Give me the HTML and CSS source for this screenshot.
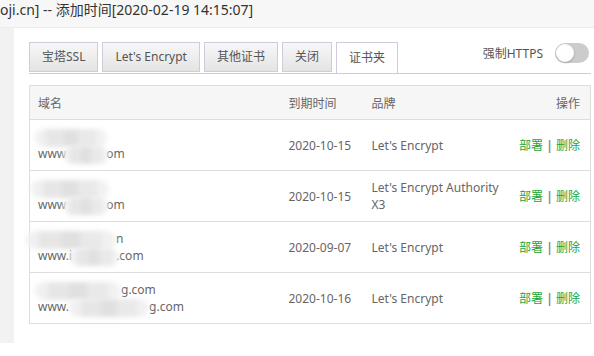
FILE: index.html
```html
<!DOCTYPE html>
<html lang="zh">
<head>
<meta charset="utf-8">
<link rel="stylesheet" href="styles.css">
</head>
<body>
<div class="topbar"><span class="title">oji.cn] -- 添加时间[2020-02-19 14:15:07]</span></div>
<div class="main">
  <div class="side"></div>
  <div class="content">
    <div class="tabbar">
      <div class="tabs">
        <div class="tab">宝塔SSL</div>
        <div class="tab">Let's Encrypt</div>
        <div class="tab">其他证书</div>
        <div class="tab">关闭</div>
        <div class="tab active">证书夹</div>
      </div>
      <div class="force">
        <span class="force-label">强制HTTPS</span>
        <span class="switch"><span class="knob"></span></span>
      </div>
    </div>
    <table class="certs">
      <colgroup>
        <col class="c-domain"><col class="c-date"><col class="c-brand"><col class="c-op">
      </colgroup>
      <thead>
        <tr><th>域名</th><th>到期时间</th><th>品牌</th><th class="op">操作</th></tr>
      </thead>
      <tbody>
        <tr>
          <td class="domain">
            <div class="line"><span class="blur b-a"></span></div>
            <div class="line">www<span class="blur b-b"></span>om</div>
          </td>
          <td>2020-10-15</td><td>Let's Encrypt</td>
          <td class="op"><a>部署</a> <span class="sep">|</span> <a>删除</a></td>
        </tr>
        <tr>
          <td class="domain">
            <div class="line"><span class="blur b-c"></span></div>
            <div class="line">www<span class="blur b-b"></span>om</div>
          </td>
          <td>2020-10-15</td><td>Let's Encrypt Authority X3</td>
          <td class="op"><a>部署</a> <span class="sep">|</span> <a>删除</a></td>
        </tr>
        <tr>
          <td class="domain">
            <div class="line"><span class="blur b-d"></span>n</div>
            <div class="line">www.i<span class="blur b-e"></span>.com</div>
          </td>
          <td>2020-09-07</td><td>Let's Encrypt</td>
          <td class="op"><a>部署</a> <span class="sep">|</span> <a>删除</a></td>
        </tr>
        <tr>
          <td class="domain">
            <div class="line"><span class="blur b-f"></span>g.com</div>
            <div class="line">www.<span class="blur b-g"></span>g.com</div>
          </td>
          <td>2020-10-16</td><td>Let's Encrypt</td>
          <td class="op"><a>部署</a> <span class="sep">|</span> <a>删除</a></td>
        </tr>
      </tbody>
    </table>
  </div>
</div>
</body>
</html>
```
FILE: styles.css
```css
html, body {
  margin: 0;
  padding: 0;
  background: #fff;
  font-family: "Noto Sans", "Noto Sans CJK SC", sans-serif;
}
.topbar {
  height: 27px;
  background: #f7f7f7;
  border-bottom: 1px solid #ebebeb;
  overflow: hidden;
}
.title {
  display: block;
  font-size: 14px;
  line-height: 20px;
  color: #333;
  white-space: nowrap;
}
.main {
  display: flex;
  height: 315px;
}
.side {
  width: 14px;
  background: #f2f2f2;
  flex: none;
}
.content {
  flex: 1;
  padding: 15px 4px 0 15px;
}
.tabbar {
  display: flex;
  justify-content: space-between;
  align-items: flex-end;
  border-bottom: 1px solid #ccccdc;
  height: 30px;
}
.tabs {
  display: flex;
  gap: 4px;
  height: 31px;
}
.tab {
  box-sizing: border-box;
  height: 30px;
  padding: 0 12px;
  font-size: 12px;
  line-height: 28px;
  color: #555;
  border: 1px solid #ccccdc;
  background: linear-gradient(#f7f7f7, #e4e4e4);
}
.tab.active {
  height: 31px;
  background: #fff;
  border-bottom: none;
  padding: 1px 12px 0;
}
.force {
  display: flex;
  align-items: center;
  height: 30px;
  margin-bottom: 5px;
  padding-right: 2px;
}
.force-label {
  font-size: 12px;
  color: #555;
  margin-right: 12px;
}
.switch {
  position: relative;
  width: 34px;
  height: 20px;
  border-radius: 10px;
  background: #ccc;
}
.knob {
  position: absolute;
  left: 1px;
  top: 1px;
  width: 18px;
  height: 18px;
  border-radius: 50%;
  background: #fff;
  box-shadow: 0 1px 2px rgba(0,0,0,0.25);
}
.certs {
  width: 100%;
  margin-top: 11px;
  border-collapse: collapse;
  table-layout: fixed;
  font-size: 12px;
  color: #666;
  border: 1px solid #ddd;
}
.c-domain { width: 251px; }
.c-date { width: 83px; }
.c-brand { width: 147px; }
.c-op { width: 80px; }
.certs th {
  height: 33px;
  background: #f6f6f6;
  text-align: left;
  font-weight: normal;
  padding: 0 8px;
  color: #666;
  border-bottom: 1px solid #ddd;
}
.certs td {
  height: 50px;
  padding: 0 8px;
  border-bottom: 1px solid #ddd;
  line-height: 17px;
}
.certs .op {
  text-align: right;
  padding-right: 10px;
}
.op a {
  color: #20a53a;
}
.sep {
  color: #888;
  font-weight: bold;
}
.line {
  height: 17px;
  white-space: nowrap;
}
.blur {
  display: inline-block;
  vertical-align: middle;
  height: 18px;
  border-radius: 9px;
  background: linear-gradient(90deg, #f0f0f0 0 15%, #e6e6e6 15% 40%, #e0e0e0 40% 60%, #e9e9e9 60% 85%, #f1f1f1 85%);
  filter: blur(2.5px);
}
.b-a { width: 72px; margin-left: -3px; }
.b-b { width: 46px; margin: 0 -3px; }
.b-c { width: 78px; margin-left: -7px; }
.b-d { width: 90px; margin-left: -12px; }
.b-e { width: 50px; margin: 0 -3px; }
.b-f { width: 86px; margin-left: -3px; }
.b-g { width: 80px; }
```
